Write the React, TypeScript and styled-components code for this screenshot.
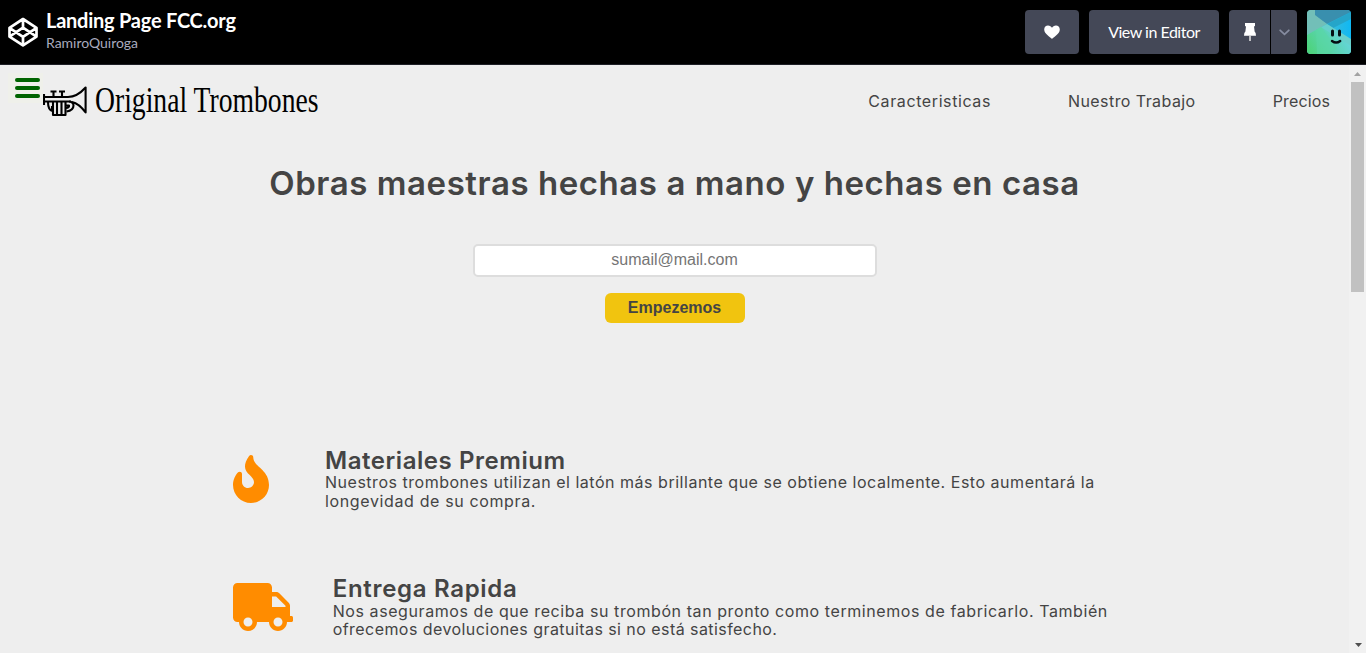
import React from 'react';
import styled, { createGlobalStyle } from 'styled-components';
import { FaFire, FaTruck } from 'react-icons/fa';

const GlobalStyle = createGlobalStyle`
  * { box-sizing: border-box; }
  body { margin: 0; background: #eee; overflow: hidden; }
  h1, h2, p { margin: 0; }
`;

const Shell = styled.div`
  display: flex;
  flex-direction: column;
  height: 653px;
  overflow: hidden;
`;

const TopBar = styled.header`
  display: flex;
  align-items: flex-start;
  justify-content: space-between;
  height: 65px;
  flex: none;
  padding: 10px 15px 0 8px;
  background: #000;
  border-bottom: 1px solid #1e1f26;
  font-family: Lato, sans-serif;
`;

const PenInfo = styled.div`
  display: flex;
  gap: 8px;
`;

const CodepenMark = styled.svg`
  width: 30px;
  height: 30px;
  margin-top: 7px;
`;

const PenTitle = styled.div`
  font-size: 20px;
  font-weight: 700;
  line-height: 20px;
  letter-spacing: -0.24px;
  color: #fff;
`;

const PenAuthor = styled.div`
  font-size: 14px;
  line-height: 18px;
  margin-top: 4px;
  letter-spacing: -0.03px;
  color: #a9abbe;
`;

const Actions = styled.div`
  display: flex;
  gap: 10px;
`;

const BarButton = styled.button<{ $width: number }>`
  display: flex;
  align-items: center;
  justify-content: center;
  width: ${(p) => p.$width}px;
  height: 44px;
  padding: 0;
  border: 0;
  border-radius: 4px;
  background: #444857;
  color: #fff;
  font: 400 16px/20px Lato, sans-serif;
  letter-spacing: -0.49px;
`;

const SplitButton = styled.div`
  display: flex;
  gap: 1px;
  ${BarButton}:first-child { border-radius: 4px 0 0 4px; }
  ${BarButton}:last-child { border-radius: 0 4px 4px 0; }
`;

const Avatar = styled.svg`
  width: 44px;
  height: 44px;
  border-radius: 4px;
`;

const Frame = styled.div`
  display: flex;
  flex: 1;
  min-height: 0;
`;

const Page = styled.main`
  flex: 1;
  overflow: hidden;
  background: #eee;
  color: #444;
  font-family: Inter, sans-serif;
`;

const SiteHeader = styled.div`
  display: flex;
  align-items: flex-start;
  height: 95px;
  padding: 8px 19px 0 8px;
`;

const MenuButton = styled.div`
  display: flex;
  flex-direction: column;
  gap: 4px;
  width: 35px;
  height: 30px;
  padding: 5px 3px 0 7px;
  background: #eff0ea;
`;

const MenuLine = styled.span`
  height: 4px;
  border-radius: 2px;
  background: #006400;
`;

const Trumpet = styled.svg`
  width: 44px;
  height: 32px;
  margin-top: 12px;
`;

const BrandName = styled.div`
  width: 224px;
  margin: 7px 0 0 8px;
  font: 400 36px/40px "Liberation Serif", serif;
  color: #000;
  white-space: nowrap;
  transform: scaleX(0.768);
  transform-origin: 0 50%;
`;

const Nav = styled.nav`
  display: flex;
  gap: 77px;
  margin: 18px 0 0 auto;
`;

const NavLink = styled.a<{ $track: number }>`
  font-size: 16px;
  line-height: 20px;
  letter-spacing: ${(p) => p.$track}px;
`;

const Hero = styled.section`
  display: flex;
  flex-direction: column;
  align-items: center;
  height: 285px;
`;

const HeroTitle = styled.h1`
  font-size: 33px;
  font-weight: 600;
  line-height: 46px;
  letter-spacing: 0.56px;
  white-space: nowrap;
`;

const EmailInput = styled.input`
  width: 404px;
  height: 33px;
  margin: 38px 0 0 1px;
  padding: 0 1px 2px 0;
  border: 2px solid #ddd;
  border-radius: 5px;
  background: #fff;
  text-align: center;
  font: 16px "Liberation Sans", sans-serif;
  &::placeholder { color: #757575; }
`;

const SubmitButton = styled.button`
  width: 140px;
  height: 30px;
  margin: 16px 0 0 1px;
  padding: 0 1px 0 0;
  border: 0;
  border-radius: 6px;
  background: #f1c40f;
  color: #444;
  font: 700 16px "Liberation Sans", sans-serif;
`;

const Feature = styled.section<{ $gap: number; $iconWidth: number }>`
  display: flex;
  align-items: flex-start;
  gap: ${(p) => p.$gap}px;
  height: 128px;
  padding-left: 232.5px;
  svg {
    flex: none;
    width: ${(p) => p.$iconWidth}px;
    height: 48px;
    margin-top: 10px;
    color: #ff8c00;
  }
`;

const FeatureTitle = styled.h2<{ $track: number; $below?: number }>`
  padding: 4px 0 ${(p) => p.$below ?? 0}px;
  font-size: 24px;
  font-weight: 600;
  line-height: 24px;
  letter-spacing: ${(p) => p.$track}px;
`;

const FeatureLine = styled.p<{ $track: number }>`
  font-size: 16px;
  line-height: 18.5px;
  letter-spacing: ${(p) => p.$track}px;
  white-space: nowrap;
`;

const ScrollTrack = styled.div`
  display: flex;
  flex-direction: column;
  align-items: center;
  justify-content: space-between;
  width: 17px;
  padding: 7px 0 6px 2px;
  background: #f1f1f1;
`;

const ScrollTop = styled.div`
  display: flex;
  flex-direction: column;
  align-items: center;
  gap: 6px;
  padding-right: 2px;
`;

const ScrollThumb = styled.div`
  width: 13px;
  height: 210px;
  background: #c1c1c1;
`;

const Arrow = styled.svg`
  display: block;
  width: 7px;
  height: 4px;
`;

export default function App() {
  return (
    <Shell>
      <GlobalStyle />
      <TopBar>
        <PenInfo>
          <CodepenMark viewBox="0 0 30 30" fill="none" stroke="#fff" strokeWidth="2.7" strokeLinejoin="round">
            <path d="M15 2 28.5 10.8V19.6L15 28.400 1.5 19.6V10.8ZM15 2v8.5M15 28v-8.500M1.5 10.8 15 19.8l13.5-9M1.5 19.6 15 10.6l13.5 9" />
          </CodepenMark>
          <div>
            <PenTitle>Landing Page FCC.org</PenTitle>
            <PenAuthor>RamiroQuiroga</PenAuthor>
          </div>
        </PenInfo>
        <Actions>
          <BarButton $width={54} aria-label="Love">
            <svg width="16" height="14" viewBox="0 0 16 14" fill="#fff">
              <path d="M8 14C6.8 12.3.2 9.200.2 4.500C.2 1.800 2 .4 4 .4C5.900.4 7.300 1.400 8 2.800C8.700 1.400 10.100.4 12 .4C14 .4 15.800 1.800 15.800 4.500C15.800 9.200 9.200 12.300 8 14Z" />
            </svg>
          </BarButton>
          <BarButton $width={130}>View in Editor</BarButton>
          <SplitButton>
            <BarButton $width={41} aria-label="Pin">
              <svg width="12" height="18" viewBox="0 0 12 18" fill="#fff">
                <path d="M1 0H11V3.200H10L10.600 8.500Q12 9.500 12 12.700H0Q0 9.500 1.400 8.500L2 3.200H1Z" />
                <path d="M5.200 12.700H6.800V18H5.200Z" fill="#ddd" />
              </svg>
            </BarButton>
            <BarButton $width={26} aria-label="More">
              <svg width="11" height="7" viewBox="0 0 11 7" fill="none" stroke="#868ca0" strokeWidth="1.8" strokeLinecap="round">
                <path d="m1.200 1.300 4.300 4 4.300-4" />
              </svg>
            </BarButton>
          </SplitButton>
          <Avatar viewBox="0 0 44 44">
            <defs>
              <linearGradient id="sky" x1="0" y1="0" x2="1" y2="0">
                <stop offset="0" stopColor="#69bdb9" />
                <stop offset="1" stopColor="#0fb8f4" />
              </linearGradient>
              <linearGradient id="grass" x1="0" y1="1" x2="1" y2="0.6">
                <stop offset="0" stopColor="#4bd373" />
                <stop offset="1" stopColor="#65d5dc" />
              </linearGradient>
            </defs>
            <path d="M0 0H44V44H0Z" fill="url(#sky)" />
            <path d="M8 0H44V2L20 14 8 7Z" fill="#398fae" />
            <path d="M20 14 44 2V9L26 18Z" fill="#25a5c9" />
            <path d="M0 0H8V5L20 14 0 25Z" fill="#72bfb8" />
            <path d="M20 14 44 29V44H0V25Z" fill="#67d0cc" />
            <path d="M0 25 14 17 44 36V44H0Z" fill="url(#grass)" />
            <path d="M9 20 14 17 30 38 20 44H10Z" fill="#5ad7a5" opacity=".6" />
            <path d="M25.500 21v4M32.500 21v4" stroke="#050d12" strokeWidth="3" strokeLinecap="round" />
            <path d="M25 31q4.200 3.200 8.200 0" fill="none" stroke="#050d12" strokeWidth="2.400" strokeLinecap="round" />
          </Avatar>
        </Actions>
      </TopBar>
      <Frame>
        <Page>
          <SiteHeader>
            <MenuButton>
              <MenuLine />
              <MenuLine />
              <MenuLine />
            </MenuButton>
            <Trumpet viewBox="0 0 44 32" fill="none" stroke="#000" strokeWidth="2.1" strokeLinejoin="round">
              <path d="M1 9V20M1 12H25Q34 12 42.600 2.500V27.500Q36 18.500 29 17M1 16.500H28M10.500 12V7M19 12V7" />
              <path d="M7.500 6.500H13.500M16 6.500H22" strokeWidth="2.2" />
              <path d="M5 17Q5 25 9.500 26M26 16.500Q30.500 17 30.500 20.500Q30.500 25.500 23.500 26.500M23 20.500H26Q26.500 22.500 23 23" />
              <path d="M10 17V30H14V17M14 30H18.500V17M18.500 30H22.500V17M9 21V25" />
            </Trumpet>
            <BrandName>Original Trombones</BrandName>
            <Nav>
              <NavLink $track={0.6}>Caracteristicas</NavLink>
              <NavLink $track={0.43}>Nuestro Trabajo</NavLink>
              <NavLink $track={0.14}>Precios</NavLink>
            </Nav>
          </SiteHeader>
          <Hero>
            <HeroTitle>Obras maestras hechas a mano y hechas en casa</HeroTitle>
            <EmailInput type="email" placeholder="sumail@mail.com" />
            <SubmitButton>Empezemos</SubmitButton>
          </Hero>
          <Feature $gap={56.5} $iconWidth={36}>
            <FaFire />
            <div>
              <FeatureTitle $track={0.55}>Materiales Premium</FeatureTitle>
              <FeatureLine $track={0.52}>
                Nuestros trombones utilizan el latón más brillante que se obtiene localmente. Esto aumentará la
              </FeatureLine>
              <FeatureLine $track={0.63}>longevidad de su compra.</FeatureLine>
            </div>
          </Feature>
          <Feature $gap={40.2} $iconWidth={60}>
            <FaTruck />
            <div>
              <FeatureTitle $track={0.69} $below={0.5}>Entrega Rapida</FeatureTitle>
              <FeatureLine $track={0.58}>
                Nos aseguramos de que reciba su trombón tan pronto como terminemos de fabricarlo. También
              </FeatureLine>
              <FeatureLine $track={0.44}>ofrecemos devoluciones gratuitas si no está satisfecho.</FeatureLine>
            </div>
          </Feature>
        </Page>
        <ScrollTrack>
          <ScrollTop>
            <Arrow viewBox="0 0 7 4" fill="#a3a3a3"><path d="M0 4 3.500 0 7 4Z" /></Arrow>
            <ScrollThumb />
          </ScrollTop>
          <Arrow viewBox="0 0 7 4" fill="#505050"><path d="M0 0 3.500 4 7 0Z" /></Arrow>
        </ScrollTrack>
      </Frame>
    </Shell>
  );
}
